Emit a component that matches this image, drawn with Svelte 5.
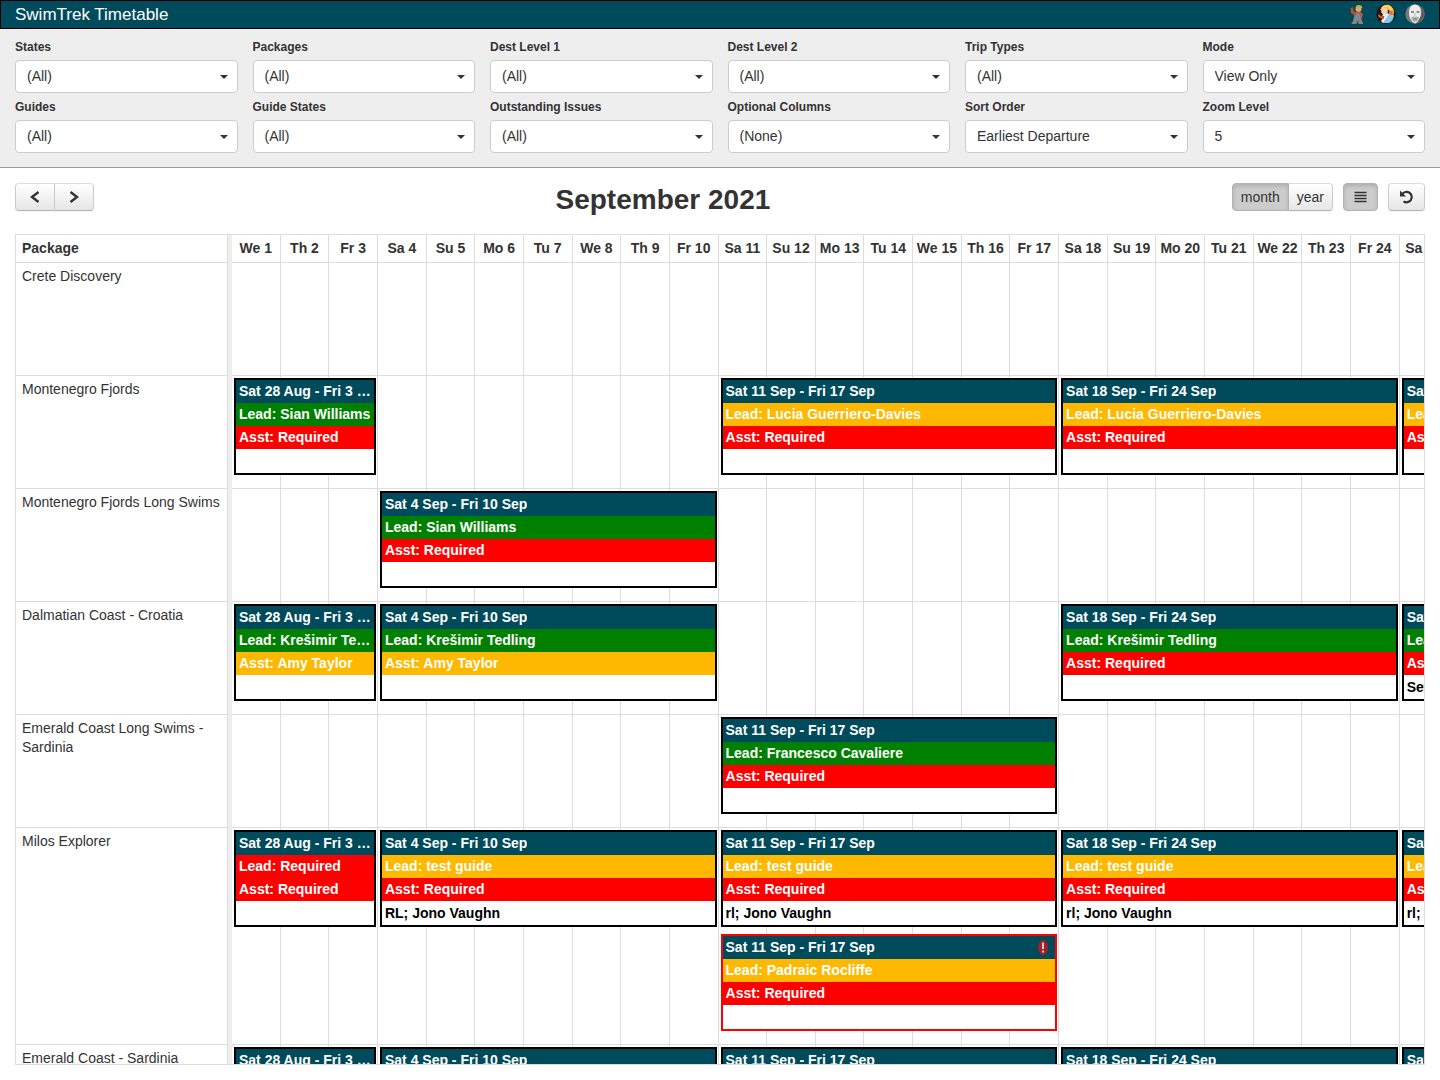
<script>
  const filters = [
    { label: 'States', value: '(All)' },
    { label: 'Packages', value: '(All)' },
    { label: 'Dest Level 1', value: '(All)' },
    { label: 'Dest Level 2', value: '(All)' },
    { label: 'Trip Types', value: '(All)' },
    { label: 'Mode', value: 'View Only' },
    { label: 'Guides', value: '(All)' },
    { label: 'Guide States', value: '(All)' },
    { label: 'Outstanding Issues', value: '(All)' },
    { label: 'Optional Columns', value: '(None)' },
    { label: 'Sort Order', value: 'Earliest Departure' },
    { label: 'Zoom Level', value: '5' }
  ];

  const dayCount = 30;
  const visibleDays = 24.5;
  const timelineWidth = (dayCount / visibleDays) * 100;
  const weekdays = ['Tu', 'We', 'Th', 'Fr', 'Sa', 'Su', 'Mo'];
  const days = Array.from({ length: dayCount }, (_, i) => `${weekdays[(i + 1) % 7]} ${i + 1}`);

  const weeks = [
    { from: 1, to: 3, title: 'Sat 28 Aug - Fri 3 Sep' },
    { from: 4, to: 10, title: 'Sat 4 Sep - Fri 10 Sep' },
    { from: 11, to: 17, title: 'Sat 11 Sep - Fri 17 Sep' },
    { from: 18, to: 24, title: 'Sat 18 Sep - Fri 24 Sep' },
    { from: 25, to: 30, title: 'Sat 25 Sep - Fri 1 Oct' }
  ];

  const trip = (week, lead, leadState, asst = 'Required', asstState = 'open', note = '', extra = {}) => ({
    ...weeks[week], lead, leadState, asst, asstState, note, lane: 1, ...extra
  });

  const packages = [
    { name: 'Crete Discovery', trips: [] },
    {
      name: 'Montenegro Fjords',
      trips: [
        trip(0, 'Sian Williams', 'ok'),
        trip(2, 'Lucia Guerriero-Davies', 'pending'),
        trip(3, 'Lucia Guerriero-Davies', 'pending'),
        trip(4, 'Lucia Guerriero-Davies', 'pending')
      ]
    },
    { name: 'Montenegro Fjords Long Swims', trips: [trip(1, 'Sian Williams', 'ok')] },
    {
      name: 'Dalmatian Coast - Croatia',
      trips: [
        trip(0, 'Krešimir Tedling', 'ok', 'Amy Taylor', 'pending'),
        trip(1, 'Krešimir Tedling', 'ok', 'Amy Taylor', 'pending'),
        trip(3, 'Krešimir Tedling', 'ok'),
        trip(4, 'Krešimir Tedling', 'ok', 'Required', 'open', 'Set up')
      ]
    },
    { name: 'Emerald Coast Long Swims - Sardinia', trips: [trip(2, 'Francesco Cavaliere', 'ok')] },
    {
      name: 'Milos Explorer',
      trips: [
        trip(0, 'Required', 'open'),
        trip(1, 'test guide', 'pending', 'Required', 'open', 'RL; Jono Vaughn'),
        trip(2, 'test guide', 'pending', 'Required', 'open', 'rl; Jono Vaughn'),
        trip(3, 'test guide', 'pending', 'Required', 'open', 'rl; Jono Vaughn'),
        trip(4, 'test guide', 'pending', 'Required', 'open', 'rl; Jono Vaughn'),
        trip(2, 'Padraic Rocliffe', 'pending', 'Required', 'open', '', { lane: 2, alert: true })
      ]
    },
    {
      name: 'Emerald Coast - Sardinia',
      trips: [0, 1, 2, 3, 4].map((w) => trip(w, 'Required', 'open'))
    }
  ];

  const laneCount = (trips) => Math.max(1, ...trips.map((t) => t.lane));
</script>

<div class="app">
  <header>
    <h1>SwimTrek Timetable</h1>
    <nav aria-label="Team">
      <button aria-label="Builder">
        <svg width="20" height="20" viewBox="0 0 20 20">
          <path d="M7 13h7l1.500 6h-4L11 16l-1 3H5.500z" fill="#7c8896" />
          <path d="M7 8h7l.5 5H7z" fill="#b0633e" />
          <path d="M8.500 10h4v4h-4z" fill="#7890a6" />
          <path d="M3.500 4l2.500-1 .5 4 2.500 2-1 2.500L4 9z" fill="#b4513c" />
          <path d="M13 8l3 2-1 4-2-1z" fill="#b55b40" />
          <circle cx="11.500" cy="5" r="3" fill="#dfa67a" />
          <path d="M8.500 3.500q.5-3 3.500-2.500 4 .5 3 3z" fill="#d9a83f" />
          <path d="M5 18h4.500v2H4.500zM11.500 18h4.500v2h-4.500z" fill="#9c7d62" />
        </svg>
      </button>
      <button aria-label="Assistant">
        <svg width="20" height="20" viewBox="0 0 20 20">
          <circle cx="10" cy="10" r="9.700" fill="#24140f" />
          <path d="M9 11l5-2 4 2q0 5-5 8l-6 0z" fill="#8cc6e8" />
          <path d="M11 9l2 1-6 9-2-2z" fill="#e9f2f7" />
          <path d="M3 10q2 3 5 2l0 3q-4 0-6-3z" fill="#d8572d" />
          <path d="M4 6q2-5 8-5 7 2 6 9l-4 1-1-5z" fill="#f0a62f" />
          <path d="M5 4q3-4 8-3 4 2 4 7l-3-2-3-3z" fill="#fbd35f" />
          <circle cx="8.500" cy="7" r="3.400" fill="#f7cfb4" />
          <path d="M8 9.500l3 1-2 2-3-1z" fill="#f3f0ea" />
          <path d="M13 7h4l-1 4-3-1z" fill="#e3702d" />
        </svg>
      </button>
      <button aria-label="Account">
        <svg width="20" height="20" viewBox="0 0 20 20">
          <circle cx="10" cy="10" r="9.700" fill="#7a7a7a" />
          <path d="M4 8q0-7 6-7.500 6 .5 6 7.500 0 9-6 11.500Q4 17 4 8z" fill="#ececec" />
          <path d="M14 2q4 3 2 10l-4 7q7-3 7.500-9T14 2z" fill="#5f5f5f" />
          <path d="M6 8h3M11.500 8h3" stroke="#707070" stroke-width="1.500" />
          <path d="M10 9v3" stroke="#bbb" />
          <path d="M6 13q4-1 8 0l-1.500 4q-2.500 2-5 0z" fill="#b5b5b5" />
          <path d="M8 15h4" stroke="#777" />
        </svg>
      </button>
    </nav>
  </header>

  <form class="filters">
    {#each filters as filter, i}
      <div class="field">
        <label for="filter-{i}">{filter.label}</label>
        <div class="select">
          <select id="filter-{i}"><option>{filter.value}</option></select>
          <svg class="caret" width="8" height="4" viewBox="0 0 8 4"><path d="M0 0h8L4 4z" fill="#333" /></svg>
        </div>
      </div>
    {/each}
  </form>

  <main>
    <div class="toolbar">
      <div class="group">
        <button class="btn arrow" aria-label="Previous">
          <svg width="12" height="14" viewBox="0 0 12 14"><path d="M9.500 2L3 7l6.500 5" fill="none" stroke="#333" stroke-width="2.400" /></svg>
        </button>
        <button class="btn arrow" aria-label="Next">
          <svg width="12" height="14" viewBox="0 0 12 14"><path d="M2.500 2L9 7l-6.500 5" fill="none" stroke="#333" stroke-width="2.400" /></svg>
        </button>
      </div>
      <h2>September 2021</h2>
      <div class="actions">
        <div class="group">
          <button class="btn active">month</button>
          <button class="btn">year</button>
        </div>
        <button class="btn active icon" aria-label="Compact rows">
          <svg width="13" height="12" viewBox="0 0 13 12"><path d="M0.500 1.500h12M0.500 4.500h12M0.500 7.500h12M0.500 10.500h12" stroke="#333" stroke-width="1.400" /></svg>
        </button>
        <button class="btn icon" aria-label="Refresh">
          <svg width="15" height="14" viewBox="0 0 15 14">
            <path d="M3.200 4.200A5.200 5.200 0 1 1 4.500 11.300" fill="none" stroke="#333" stroke-width="2.200" />
            <path d="M1 .5v6h6z" fill="#333" />
          </svg>
        </button>
      </div>
    </div>

    <div class="schedule">
      <table>
        <colgroup><col class="col-name" /><col class="col-split" /><col /></colgroup>
        <thead>
          <tr>
            <th class="name" scope="col">Package</th>
            <td class="split"></td>
            <th class="time" scope="col">
              <div class="timeline head" style:width="{timelineWidth}%">
                {#each days as day}<span class="day">{day}</span>{/each}
              </div>
            </th>
          </tr>
        </thead>
        <tbody>
          {#each packages as pack}
            <tr>
              <th class="name" scope="row">{pack.name}</th>
              <td class="split"></td>
              <td class="time">
                <div class="timeline" style:width="{timelineWidth}%">
                  {#each days as _, i}
                    <span class="slot" style:grid-column={i + 1} style:grid-row="1 / span {laneCount(pack.trips)}"></span>
                  {/each}
                  {#each pack.trips as t}
                    <article class="trip" class:alert={t.alert} class:stacked={t.lane > 1} style:grid-column="{t.from} / {t.to + 1}" style:grid-row={t.lane}>
                      <div class="line title">
                        <span class="text">{t.title}</span>
                        {#if t.alert}
                          <svg width="10" height="15" viewBox="0 0 10 15">
                            <ellipse cx="5" cy="7.500" rx="5" ry="7.500" fill="#a3202a" />
                            <path d="M5 2.500v6.500M5 10.500v2" stroke="#c9c9c9" stroke-width="2" />
                          </svg>
                        {/if}
                      </div>
                      <div class="line {t.leadState}">Lead: {t.lead}</div>
                      <div class="line {t.asstState}">Asst: {t.asst}</div>
                      <div class="line note">{t.note}</div>
                    </article>
                  {/each}
                </div>
              </td>
            </tr>
          {/each}
        </tbody>
      </table>
    </div>
  </main>
</div>

<style>
  :global(body) {
    margin: 0;
    background: #fff;
  }
  .app, .app * {
    box-sizing: border-box;
  }
  .app {
    display: flex;
    flex-direction: column;
    height: 100vh;
    overflow: hidden;
    color: #333;
    font: 14px/19px "Liberation Sans", Arial, sans-serif;
  }
  button, select {
    font: inherit;
    color: inherit;
    margin: 0;
  }
  header {
    display: flex;
    align-items: center;
    justify-content: space-between;
    padding: 0 14px;
    border: 1px solid #000;
    background: #004b5b;
    color: #fff;
  }
  h1 {
    margin: 0;
    font-size: 17px;
    line-height: 27px;
    font-weight: 400;
  }
  nav {
    display: flex;
    gap: 9px;
    padding-bottom: 2px;
  }
  nav button {
    display: flex;
    padding: 0;
    border: 0;
    background: none;
  }
  .filters {
    display: grid;
    grid-template-columns: repeat(6, 1fr);
    gap: 6px 15px;
    padding: 10px 15px 14px;
    background: #eee;
    border-bottom: 1px solid #999;
  }
  .field {
    display: flex;
    flex-direction: column;
    gap: 4px;
  }
  label {
    font-size: 12px;
    line-height: 17px;
    font-weight: 700;
  }
  .select {
    display: grid;
    align-items: center;
  }
  .select > * {
    grid-area: 1 / 1;
  }
  select {
    appearance: none;
    width: 100%;
    height: 33px;
    padding: 0 24px 0 11px;
    border: 1px solid #ccc;
    border-radius: 4px;
    background: #fff;
  }
  .caret {
    justify-self: end;
    margin-right: 10px;
    pointer-events: none;
  }
  main {
    display: flex;
    flex-direction: column;
    flex: 1;
    min-height: 0;
    gap: 18px;
    padding: 15px;
  }
  .toolbar {
    display: flex;
    justify-content: space-between;
    align-items: flex-start;
  }
  h2 {
    margin: 0;
    font-size: 28px;
    line-height: 33px;
    font-weight: 700;
  }
  .group {
    display: flex;
  }
  .actions {
    display: flex;
    gap: 10px;
  }
  .btn {
    display: flex;
    align-items: center;
    justify-content: center;
    height: 28px;
    padding: 0 8px;
    border: 1px solid;
    border-color: #ddd #ccc #b3b3b3;
    border-radius: 4px;
    background: linear-gradient(#fff, #e6e6e6);
    box-shadow: 0 1px 2px rgba(0, 0, 0, 0.05);
  }
  .group .btn:first-child {
    border-radius: 4px 0 0 4px;
  }
  .group .btn:last-child {
    border-left: 0;
    border-radius: 0 4px 4px 0;
  }
  .btn.active {
    background: #ccc;
    border-color: #b3b3b3;
    box-shadow: inset 0 2px 4px rgba(0, 0, 0, 0.15);
  }
  .btn.arrow {
    padding: 0 13px;
  }
  .btn.icon {
    padding: 0 10px;
  }
  .schedule {
    flex: 1;
    min-height: 0;
    overflow: hidden;
    border: 1px solid #ddd;
  }
  table {
    width: 100%;
    table-layout: fixed;
    border-collapse: separate;
    border-spacing: 0;
  }
  .col-name {
    width: 212px;
  }
  .col-split {
    width: 4px;
  }
  th, td {
    padding: 0;
    vertical-align: top;
  }
  .name {
    padding: 4px 2px 4px 6px;
    border: solid #ddd;
    border-width: 0 1px 1px 0;
    text-align: left;
    font-weight: 400;
  }
  thead .name {
    font-weight: 700;
  }
  .split {
    background: #eee;
  }
  .time {
    overflow: hidden;
    border-bottom: 1px solid #ddd;
  }
  .timeline {
    display: grid;
    grid-template-columns: repeat(30, 1fr);
    grid-auto-rows: minmax(112px, auto);
  }
  .timeline.head {
    grid-auto-rows: 27px;
  }
  .day, .slot {
    border-right: 1px solid #ddd;
  }
  .day {
    line-height: 27px;
    text-align: center;
    white-space: nowrap;
  }
  .trip {
    z-index: 1;
    align-self: start;
    min-width: 0;
    margin: 2px 2px 6px;
    border: 2px solid #000;
    background: #fff;
    color: #fff;
    font-weight: 700;
  }
  .timeline:has(.stacked) {
    grid-auto-rows: auto;
  }
  .trip.stacked {
    margin: 1px 2px 13px;
  }
  .trip.alert {
    border-color: #f00;
  }
  .line {
    height: 23px;
    padding: 0 3px;
    line-height: 23px;
    white-space: nowrap;
    overflow: hidden;
    text-overflow: ellipsis;
  }
  .title {
    display: flex;
    align-items: center;
    justify-content: space-between;
    background: #004b5b;
  }
  .title svg {
    flex: none;
    margin-right: 4px;
  }
  .text {
    overflow: hidden;
    text-overflow: ellipsis;
  }
  .ok {
    background: #008000;
  }
  .pending {
    background: #ffb800;
  }
  .open {
    background: #f00;
  }
  .note {
    height: 24px;
    line-height: 24px;
    color: #000;
  }
</style>
